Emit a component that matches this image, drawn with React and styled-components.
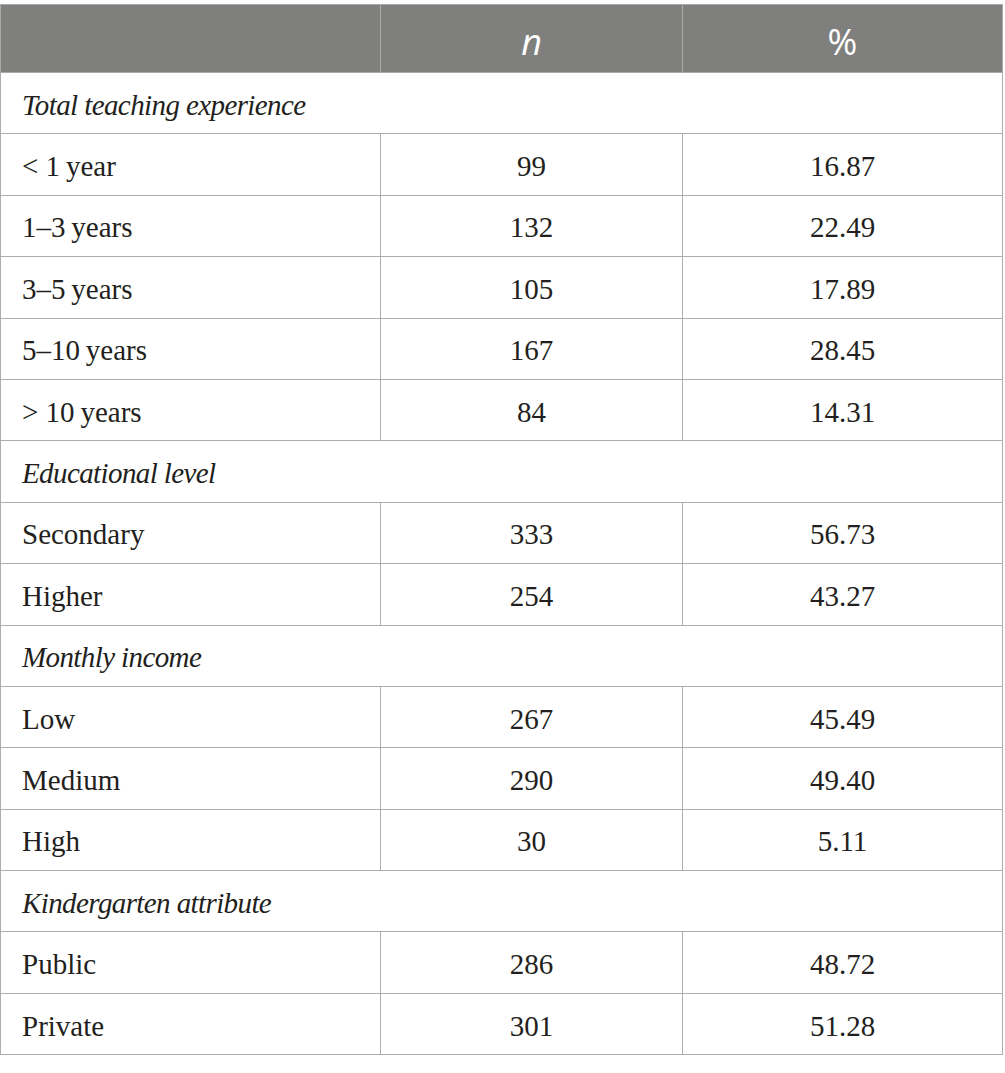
import React from "react";
import styled, { createGlobalStyle } from "styled-components";

const sections = [
  {
    title: "Total teaching experience",
    rows: [
      ["< 1\u2009year", "99", "16.87"],
      ["1\u20133\u2009years", "132", "22.49"],
      ["3\u20135\u2009years", "105", "17.89"],
      ["5\u201310\u2009years", "167", "28.45"],
      ["> 10\u2009years", "84", "14.31"],
    ],
  },
  {
    title: "Educational level",
    rows: [
      ["Secondary", "333", "56.73"],
      ["Higher", "254", "43.27"],
    ],
  },
  {
    title: "Monthly income",
    rows: [
      ["Low", "267", "45.49"],
      ["Medium", "290", "49.40"],
      ["High", "30", "5.11"],
    ],
  },
  {
    title: "Kindergarten attribute",
    rows: [
      ["Public", "286", "48.72"],
      ["Private", "301", "51.28"],
    ],
  },
];

const App = () => {
  return (
    <>
      <GlobalStyle />
      <Table>
        <colgroup>
          <col style={{ width: 380 }} />
          <col style={{ width: 302 }} />
          <col style={{ width: 320 }} />
        </colgroup>
        <thead>
          <HeadRow>
            <HeadCell />
            <HeadCell $italic>n</HeadCell>
            <HeadCell>%</HeadCell>
          </HeadRow>
        </thead>
        <tbody>
          {sections.map((section) => (
            <React.Fragment key={section.title}>
              <Row>
                <SectionCell colSpan={3}>{section.title}</SectionCell>
              </Row>
              {section.rows.map((row) => (
                <Row key={row[0]}>
                  <LabelCell>{row[0]}</LabelCell>
                  <NumCell>{row[1]}</NumCell>
                  <NumCell>{row[2]}</NumCell>
                </Row>
              ))}
            </React.Fragment>
          ))}
        </tbody>
      </Table>
    </>
  );
};

const GlobalStyle = createGlobalStyle`
  body {
    margin: 0;
    background: #ffffff;
  }
`;

const Table = styled.table`
  margin-top: 4px;
  width: 1002px;
  border-collapse: collapse;
  table-layout: fixed;
  font-family: "Liberation Serif", "Times New Roman", serif;
  font-size: 29px;
  color: #231f20;
`;

const HeadRow = styled.tr`
  height: 68px;
  background: #7f807e;
`;

const HeadCell = styled.th`
  border: 1px solid #a9aaa8;
  padding: 6px 0 0;
  text-align: center;
  vertical-align: middle;
  font-family: "Open Sans", "Liberation Sans", sans-serif;
  font-size: 36px;
  font-weight: 400;
  font-style: ${(p) => (p.$italic ? "italic" : "normal")};
  color: #ffffff;
`;

const Row = styled.tr`
  height: 61.4px;
`;

const cellBase = `
  border: 1px solid #adadad;
  vertical-align: middle;
  padding: 4px 0 0;
`;

const SectionCell = styled.td`
  ${cellBase}
  padding-left: 21px;
  font-style: italic;
  letter-spacing: -0.6px;
`;

const LabelCell = styled.td`
  ${cellBase}
  padding-left: 21px;
`;

const NumCell = styled.td`
  ${cellBase}
  text-align: center;
`;

export default App;
